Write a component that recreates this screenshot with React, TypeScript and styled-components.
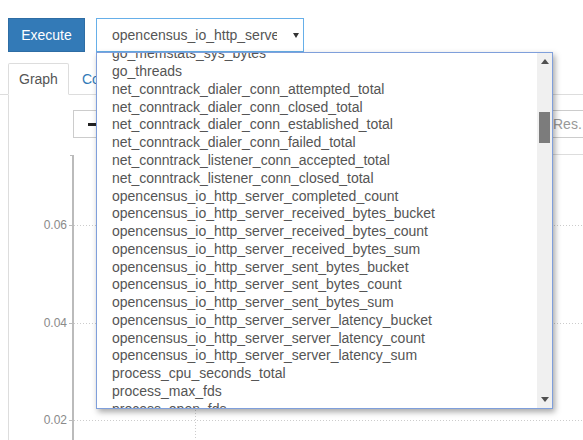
import React from 'react';
import styled, { createGlobalStyle } from 'styled-components';

const GlobalStyle = createGlobalStyle`
    html, body {
        margin: 0;
        padding: 0;
        overflow: hidden;
        background: #fff;
        font-family: "Liberation Sans", Arial, sans-serif;
        font-size: 14px;
        color: #555;
    }
`;

const Page = styled.div`
    width: 620px;
    height: 440px;
    overflow: hidden;
`;

const QueryRow = styled.div`
    display: flex;
    align-items: flex-start;
    gap: 11px;
    padding: 18px 0 0 8px;
`;

const ExecuteButton = styled.button`
    width: 77px;
    height: 34px;
    border: 1px solid #2e6da4;
    border-radius: 0;
    background: #337ab7;
    color: #fff;
    font-family: inherit;
    font-size: 14px;
    padding: 0;
`;

const SelectWrap = styled.div`
    position: relative;
`;

const SelectBox = styled.div`
    box-sizing: border-box;
    width: 208px;
    height: 34px;
    border: 1px solid #66afe9;
    display: flex;
    align-items: center;
    padding: 0 0 0 15px;
    color: #555;
`;

const SelectValue = styled.span`
    width: 165px;
    overflow: hidden;
    white-space: nowrap;
`;

const SelectArrow = styled.svg`
    margin-left: 16px;
`;

const Dropdown = styled.div`
    position: absolute;
    top: 100%;
    left: 0;
    z-index: 10;
    box-sizing: border-box;
    width: 457px;
    height: 357px;
    border: 1px solid #7f9fdb;
    background: #fff;
    box-shadow: 2px 3px 6px rgba(0, 0, 0, 0.35);
    display: flex;
`;

const OptionList = styled.div`
    flex: 1;
    overflow: hidden;
`;

const Options = styled.ul`
    list-style: none;
    margin: -7.6px 0 0;
    padding: 0;
`;

const Option = styled.li`
    padding-left: 15px;
    line-height: 17.78px;
    height: 17.78px;
    white-space: nowrap;
    color: #555;
`;

const Scrollbar = styled.div`
    width: 15px;
    background: #f0f0f0;
    display: flex;
    flex-direction: column;
`;

const ScrollArrow = styled.div`
    height: 17px;
    display: flex;
    align-items: center;
    justify-content: center;
`;

const ScrollTrack = styled.div`
    flex: 1;
`;

const ScrollThumb = styled.div`
    width: 11px;
    height: 31px;
    margin: 42px 0 0 2px;
    background: #7c7c7c;
`;

const Tabs = styled.ul`
    list-style: none;
    margin: 11px 0 0;
    padding: 0 0 0 8px;
    display: flex;
    height: 31px;
    border-bottom: 1px solid #ddd;
`;

const Tab = styled.li<{ $active?: boolean }>`
    box-sizing: border-box;
    height: 32px;
    margin: 0 2px -1px 0;
    padding: 5px 10px;
    line-height: 20px;
    border: 1px solid ${p => (p.$active ? '#ddd' : 'transparent')};
    border-bottom-color: transparent;
    border-radius: 2px 2px 0 0;
    background: ${p => (p.$active ? '#fff' : 'transparent')};
    color: ${p => (p.$active ? '#555' : '#337ab7')};
`;

const TabContent = styled.div`
    margin-left: 8px;
    border-left: 1px solid #ddd;
    padding-top: 15px;
    height: 400px;
`;

const Controls = styled.div`
    display: flex;
    height: 28px;
    padding-left: 64px;
`;

const MinusButton = styled.button`
    box-sizing: border-box;
    height: 28px;
    width: 42px;
    border: 1px solid #ccc;
    background: #fff;
    padding: 0 0 0 14px;
    display: flex;
    align-items: center;
`;

const MinusBar = styled.span`
    width: 12px;
    height: 3px;
    background: #222;
`;

const ResInput = styled.div`
    box-sizing: border-box;
    margin-left: auto;
    width: 79px;
    height: 28px;
    border: 1px solid #ccc;
    border-right: none;
    padding-left: 11px;
    line-height: 26px;
    color: #999;
`;

const Chart = styled.svg`
    display: block;
    margin-top: 16px;
`;

const metrics = [
    'go_memstats_sys_bytes',
    'go_threads',
    'net_conntrack_dialer_conn_attempted_total',
    'net_conntrack_dialer_conn_closed_total',
    'net_conntrack_dialer_conn_established_total',
    'net_conntrack_dialer_conn_failed_total',
    'net_conntrack_listener_conn_accepted_total',
    'net_conntrack_listener_conn_closed_total',
    'opencensus_io_http_server_completed_count',
    'opencensus_io_http_server_received_bytes_bucket',
    'opencensus_io_http_server_received_bytes_count',
    'opencensus_io_http_server_received_bytes_sum',
    'opencensus_io_http_server_sent_bytes_bucket',
    'opencensus_io_http_server_sent_bytes_count',
    'opencensus_io_http_server_sent_bytes_sum',
    'opencensus_io_http_server_server_latency_bucket',
    'opencensus_io_http_server_server_latency_count',
    'opencensus_io_http_server_server_latency_sum',
    'process_cpu_seconds_total',
    'process_max_fds',
    'process_open_fds',
    'process_resident_memory_bytes',
];

const ticks = [
    { label: '0.06', y: 71 },
    { label: '0.04', y: 169 },
    { label: '0.02', y: 266 },
];

const Triangle = ({ up }: { up?: boolean }) => (
    <svg width="8" height="5" viewBox="0 0 8 5">
        <path d={up ? 'M0 5 L4 0 L8 5 Z' : 'M0 0 L8 0 L4 5 Z'} fill="#505050" />
    </svg>
);

const App: React.FC = () => (
    <Page>
        <GlobalStyle />
        <QueryRow>
            <ExecuteButton>Execute</ExecuteButton>
            <SelectWrap>
                <SelectBox>
                    <SelectValue>opencensus_io_http_server_server_latency_count</SelectValue>
                    <SelectArrow width="6" height="5" viewBox="0 0 6 5">
                        <path d="M0 0 L6 0 L3 5 Z" fill="#333" />
                    </SelectArrow>
                </SelectBox>
                <Dropdown>
                    <OptionList>
                        <Options>
                            {metrics.map(m => (
                                <Option key={m}>{m}</Option>
                            ))}
                        </Options>
                    </OptionList>
                    <Scrollbar>
                        <ScrollArrow>
                            <Triangle up />
                        </ScrollArrow>
                        <ScrollTrack>
                            <ScrollThumb />
                        </ScrollTrack>
                        <ScrollArrow>
                            <Triangle />
                        </ScrollArrow>
                    </Scrollbar>
                </Dropdown>
            </SelectWrap>
        </QueryRow>

        <Tabs>
            <Tab $active>Graph</Tab>
            <Tab>Console</Tab>
        </Tabs>

        <TabContent>
            <Controls>
                <MinusButton>
                    <MinusBar />
                </MinusButton>
                <ResInput>Res. (s)</ResInput>
            </Controls>
            <Chart width="611" height="300">
                <line x1="300" y1="0.5" x2="611" y2="0.5" stroke="#ddd" />
                <line x1="186.5" y1="1" x2="186.5" y2="300" stroke="#ccc" strokeDasharray="1 2" />
                {ticks.map(t => (
                    <g key={t.label}>
                        <line x1="65" y1={t.y + 0.5} x2="611" y2={t.y + 0.5} stroke="#ccc" strokeDasharray="1 2" />
                        <line x1="60" y1={t.y + 0.5} x2="64" y2={t.y + 0.5} stroke="#bbb" />
                        <text
                            x="58"
                            y={t.y + 4}
                            textAnchor="end"
                            fontSize="12"
                            fontFamily="Liberation Sans, Arial, sans-serif"
                            fill="#8a8a8a"
                        >
                            {t.label}
                        </text>
                    </g>
                ))}
                <line x1="61" y1="1.5" x2="65" y2="1.5" stroke="#bbb" />
                <line x1="64" y1="1" x2="64" y2="300" stroke="#bbb" strokeWidth="2" />
            </Chart>
        </TabContent>
    </Page>
);

export default App;
